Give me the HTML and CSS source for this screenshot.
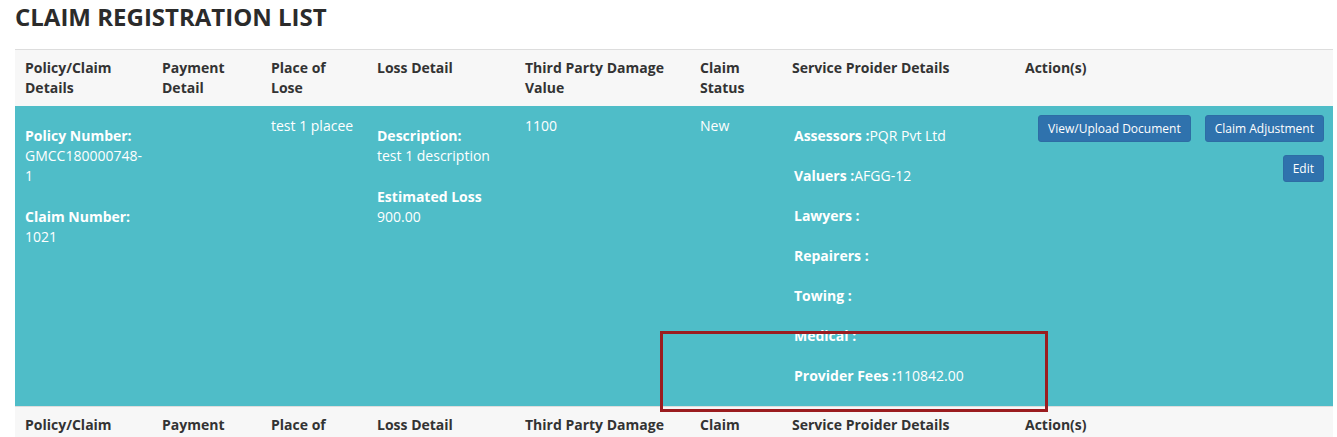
FILE: index.html
```html
<!DOCTYPE html>
<html>
<head>
<meta charset="utf-8">
<link rel="stylesheet" href="styles.css">
</head>
<body>
<div class="page">
  <h2 class="title">CLAIM REGISTRATION LIST</h2>
  <table class="claims">
    <colgroup>
      <col class="c1"><col class="c2"><col class="c3"><col class="c4"><col class="c5"><col class="c6"><col class="c7"><col class="c8">
    </colgroup>
    <thead>
      <tr class="head">
        <th>Policy/Claim Details</th>
        <th>Payment Detail</th>
        <th>Place of Lose</th>
        <th>Loss Detail</th>
        <th>Third Party Damage Value</th>
        <th>Claim Status</th>
        <th>Service Proider Details</th>
        <th>Action(s)</th>
      </tr>
    </thead>
    <tbody>
      <tr class="row">
        <td>
          <div class="block">
            <div class="lbl">Policy Number:</div>
            <div class="val">GMCC180000748-1</div>
          </div>
          <div class="block">
            <div class="lbl">Claim Number:</div>
            <div class="val">1021</div>
          </div>
        </td>
        <td></td>
        <td>test 1 placee</td>
        <td>
          <div class="block">
            <div class="lbl">Description:</div>
            <div class="val">test 1 description</div>
          </div>
          <div class="block">
            <div class="lbl">Estimated Loss</div>
            <div class="val">900.00</div>
          </div>
        </td>
        <td>1100</td>
        <td>New</td>
        <td class="providers">
          <div class="prov"><b>Assessors :</b>PQR Pvt Ltd</div>
          <div class="prov"><b>Valuers :</b>AFGG-12</div>
          <div class="prov"><b>Lawyers :</b></div>
          <div class="prov"><b>Repairers :</b></div>
          <div class="prov"><b>Towing :</b></div>
          <div class="prov"><b>Medical :</b></div>
          <div class="prov"><b>Provider Fees :</b>110842.00</div>
        </td>
        <td class="actions">
          <div class="btn-line">
            <button class="btn">View/Upload Document</button>
            <button class="btn">Claim Adjustment</button>
          </div>
          <div class="btn-line">
            <button class="btn">Edit</button>
          </div>
        </td>
      </tr>
      <tr class="head">
        <th>Policy/Claim Details</th>
        <th>Payment Detail</th>
        <th>Place of Lose</th>
        <th>Loss Detail</th>
        <th>Third Party Damage Value</th>
        <th>Claim Status</th>
        <th>Service Proider Details</th>
        <th>Action(s)</th>
      </tr>
    </tbody>
  </table>
  <div class="highlight"></div>
</div>
</body>
</html>
```

FILE: styles.css
```css
html, body {
  margin: 0;
  padding: 0;
  background: #ffffff;
}
body {
  font-family: "Open Sans", "Liberation Sans", sans-serif;
  font-size: 14px;
  line-height: 20px;
  color: #333333;
}
.page {
  position: relative;
  padding: 0 4px 0 15px;
}
.title {
  margin: 0;
  padding: 3px 0 0 0;
  height: 49px;
  box-sizing: border-box;
  font-size: 24px;
  line-height: 28px;
  font-weight: 700;
  color: #2b2b2b;
}
.claims {
  width: 1318px;
  border-collapse: collapse;
  table-layout: fixed;
}
.c1 { width: 137px; }
.c2 { width: 109px; }
.c3 { width: 106px; }
.c4 { width: 148px; }
.c5 { width: 175px; }
.c6 { width: 92px; }
.c7 { width: 233px; }
.c8 { width: 318px; }
.head th {
  background: #f7f7f7;
  border-top: 1px solid #dddddd;
  text-align: left;
  vertical-align: top;
  font-weight: 700;
  padding: 8px 10px 8px 10px;
  height: 40px;
  color: #333333;
}
.row td {
  background: #4fbdc8;
  color: #ffffff;
  vertical-align: top;
  padding: 10px 10px 0 10px;
  height: 290px;
  word-wrap: break-word;
}
.block {
  margin-top: 10px;
  margin-bottom: 21px;
}
.block + .block {
  margin-top: 0;
}
.lbl {
  font-weight: 700;
}
.val {
  word-break: break-all;
}
.row td.providers {
  padding-left: 12px;
}
.prov {
  margin-top: 10px;
  margin-bottom: 20px;
}
.prov + .prov {
  margin-top: 0;
}
.row td.actions {
  text-align: right;
  padding-right: 9px;
  padding-top: 9px;
}
.btn-line {
  display: flex;
  justify-content: flex-end;
  gap: 14px;
  margin-bottom: 13px;
}
.btn {
  font-family: "Open Sans", "Liberation Sans", sans-serif;
  font-size: 12px;
  line-height: 17px;
  color: #ffffff;
  background: #2f72ad;
  border: 1px solid #2e6da4;
  border-radius: 3px;
  padding: 4px 9px 4px 9px;
  height: 27px;
}
.highlight {
  position: absolute;
  left: 660px;
  top: 331px;
  width: 382px;
  height: 75px;
  border: 3px solid #9b1c1f;
}
```
